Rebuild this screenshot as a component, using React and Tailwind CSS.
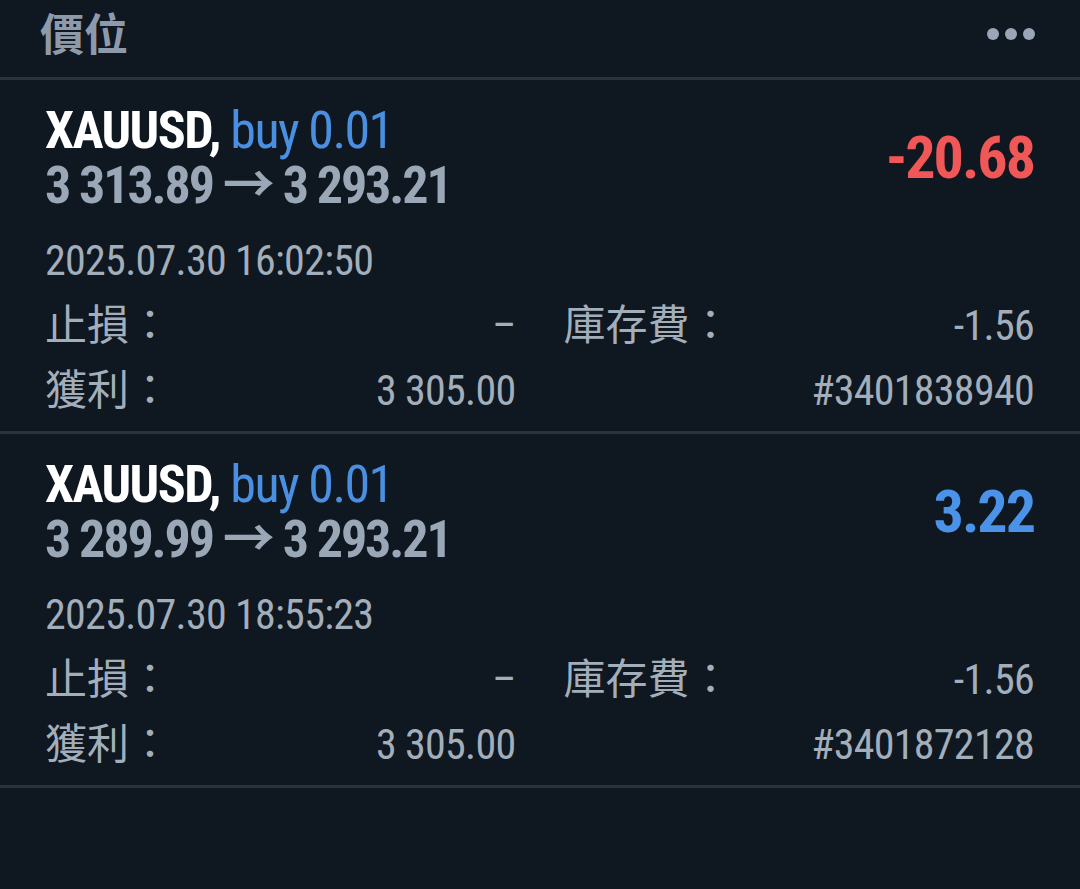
import React from "react";

const font = { fontFamily: '"Roboto Condensed", Roboto, "Noto Sans CJK TC", sans-serif' };

function Position({ open, close, profit, profitClass, date, sl, tp, swap, ticket }) {
  return (
    <div className="pl-[45px] pr-[46px] pt-[23px] pb-[8px] border-b-[3px] border-[#2a333d]">
      <div className="flex items-center justify-between">
        <div>
          <div className="text-[52px] leading-[55px] font-bold text-white tracking-[-1.6px]">
            XAUUSD, <span className="font-normal text-[#4a90e2]">buy 0.01</span>
          </div>
          <div className="text-[52px] leading-[55px] font-bold text-[#9aa7b6] tracking-[-2.1px]">
            {open} → {close}
          </div>
        </div>
        <div className={"text-[60px] leading-[60px] font-bold tracking-[-2px] " + profitClass}>{profit}</div>
      </div>
      <div className="mt-[15px] text-[42px] leading-[65px] text-[#a3aebb] tracking-[-0.7px]">{date}</div>
      <div className="grid grid-cols-2 gap-x-[48px] text-[42px] leading-[65px] text-[#a3aebb]">
        <div className="flex justify-between">
          <span>止損：</span>
          <span className="tracking-[-0.7px]">{sl}</span>
        </div>
        <div className="flex justify-between">
          <span>庫存費：</span>
          <span className="tracking-[-0.7px]">{swap}</span>
        </div>
        <div className="flex justify-between">
          <span>獲利：</span>
          <span className="tracking-[-0.7px]">{tp}</span>
        </div>
        <div className="flex justify-end">
          <span className="tracking-[-0.7px]">{ticket}</span>
        </div>
      </div>
    </div>
  );
}

export default function App() {
  return (
    <div className="w-[1080px] h-[889px] bg-[#0f1720]" style={font}>
      <div className="h-[80px] flex items-center justify-between pl-[40px] pr-[45px] border-b-[3px] border-[#2a333d]">
        <div className="text-[44px] font-bold text-[#8e9aaa] -mt-[6px]">價位</div>
        <div className="flex gap-[6px] -mt-[10px]">
          <span className="w-[12px] h-[12px] rounded-full bg-[#9aa6b8]"></span>
          <span className="w-[12px] h-[12px] rounded-full bg-[#9aa6b8]"></span>
          <span className="w-[12px] h-[12px] rounded-full bg-[#9aa6b8]"></span>
        </div>
      </div>
      <Position
        open="3 313.89"
        close="3 293.21"
        profit="-20.68"
        profitClass="text-[#f25757]"
        date="2025.07.30 16:02:50"
        sl="–"
        tp="3 305.00"
        swap="-1.56"
        ticket="#3401838940"
      />
      <Position
        open="3 289.99"
        close="3 293.21"
        profit="3.22"
        profitClass="text-[#4a93e8]"
        date="2025.07.30 18:55:23"
        sl="–"
        tp="3 305.00"
        swap="-1.56"
        ticket="#3401872128"
      />
    </div>
  );
}
